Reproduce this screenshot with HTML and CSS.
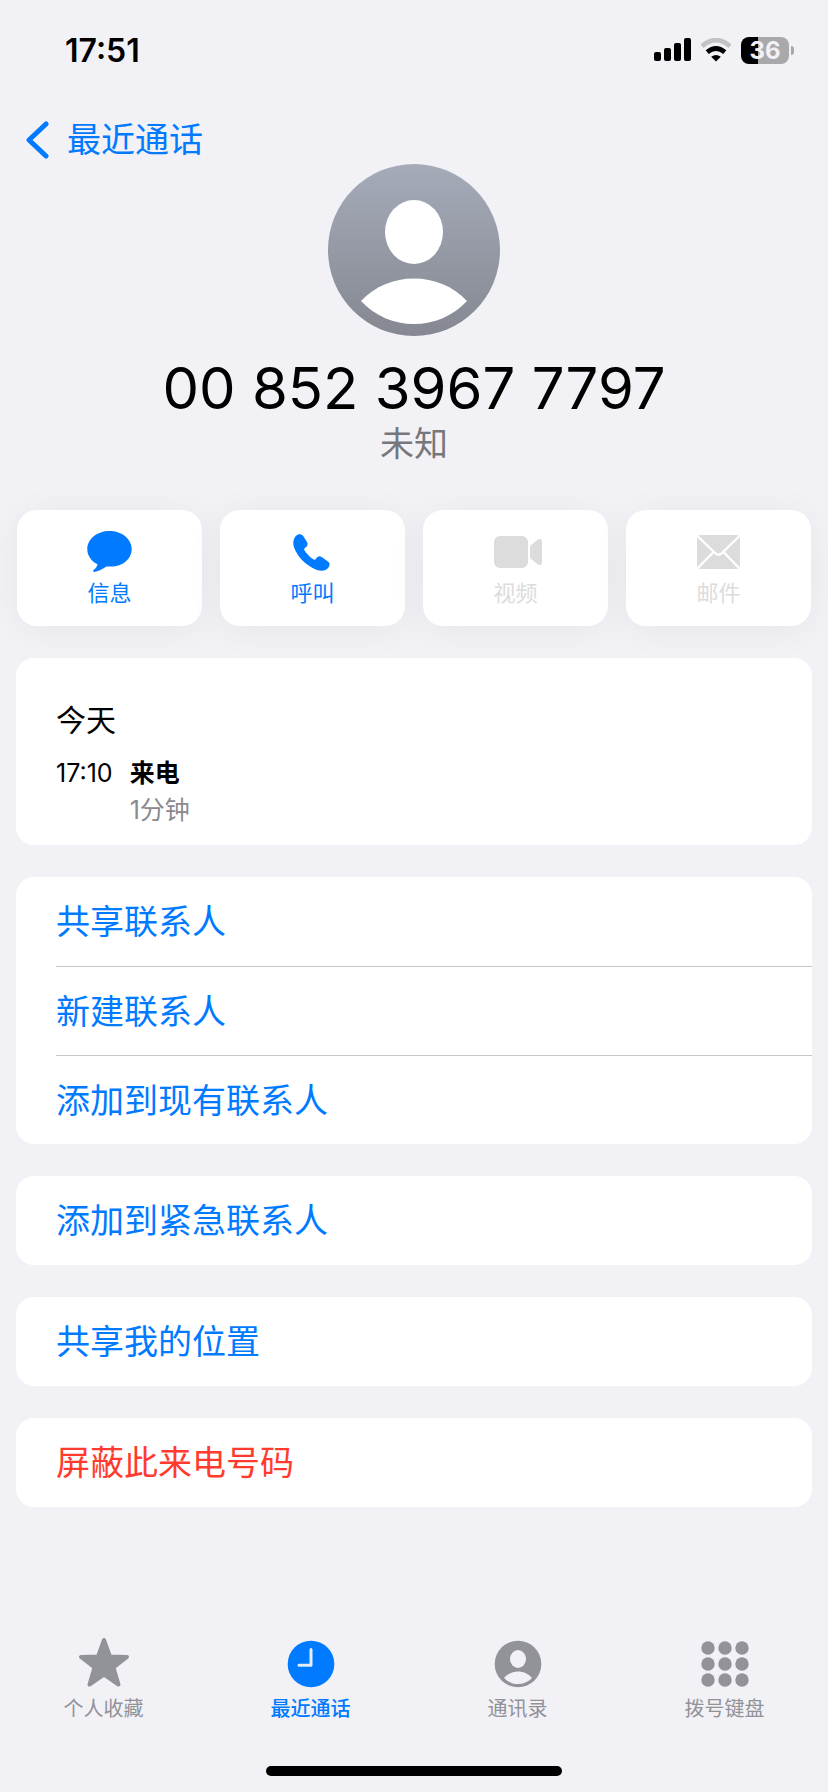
FILE: index.html
```html
<!DOCTYPE html>
<html lang="zh-CN">
<head>
    <meta charset="UTF-8">
    <meta name="viewport" content="width=device-width, initial-scale=1.0">
    <title>最近通话</title>
    <link rel="stylesheet" href="styles.css">
</head>
<body>

    <div class="status-bar">
        <span class="time">17:51</span>
        <div class="status-icons">
            <svg width="37" height="24" viewBox="0 0 37 24">
                <rect x="0" y="14" width="7" height="9" rx="2"/>
                <rect x="10" y="10" width="7" height="13" rx="2"/>
                <rect x="20" y="5" width="7" height="18" rx="2"/>
                <rect x="30" y="0" width="7" height="23" rx="2"/>
            </svg>
            <svg width="32" height="24" viewBox="0 0 32 24">
                <path d="M2 8.2Q16-4.2 30 8.2" fill="none" stroke="#c3c3c7" stroke-width="4.6"/>
                <path d="M7.2 14.2Q16 6.8 24.8 14.2" fill="none" stroke="#000" stroke-width="4.8"/>
                <path d="M11.2 18.8Q16 15 20.8 18.8L16 23.6Z"/>
            </svg>
            <div class="battery">
                <span class="battery-level">36</span>
                <span class="battery-tip"></span>
            </div>
        </div>
    </div>

    <nav class="nav-bar">
        <a href="#" class="back">
            <svg width="24" height="40" viewBox="0 0 24 40">
                <path d="M20 4L3 20L20 36" fill="none" stroke="currentColor" stroke-width="5" stroke-linecap="round" stroke-linejoin="round"/>
            </svg>
            最近通话
        </a>
    </nav>

    <header class="contact">
        <svg class="avatar" width="172" height="172" viewBox="0 0 172 172">
            <defs>
                <linearGradient id="avatarFill" x1="0" y1="0" x2="0" y2="1">
                    <stop offset="0" stop-color="#a5abb9"/>
                    <stop offset="1" stop-color="#858891"/>
                </linearGradient>
            </defs>
            <circle cx="86" cy="86" r="86" fill="url(#avatarFill)"/>
            <ellipse cx="86" cy="68" rx="29" ry="32" fill="#fff"/>
            <path d="M33 137C47 122 66 114.500 86 114.500S125 122 139 137C125 152 106 160 86 160S47 152 33 137Z" fill="#fff"/>
        </svg>
        <h1>00 852 3967 7797</h1>
        <p>未知</p>
    </header>

    <main>
        <div class="actions">
            <button type="button">
                <svg width="46" height="42" viewBox="0 0 46 42">
                    <path d="M22.500 0C34.800 0 44.700 8 44.700 18S35.600 35.600 24 35.600H19.500C15 38.500 10.500 40.700 7.500 41C6 41 5.700 39.800 6.600 39C8.700 37.500 10 35.500 10.500 33.200C4 30 0.300 24.500 0.300 18C0.300 8 10.200 0 22.500 0Z"/>
                </svg>
                信息
            </button>
            <button type="button">
                <svg width="40" height="42" viewBox="0 0 40 42">
                    <path transform="translate(0 3)" d="M0.300 9C0.300 4.500 3 0.600 6 0.200C7.600 0 9 0.500 10 1.800L14 8C15 9.700 14.800 11.300 13.600 12.600L11.400 14.500C11 14.900 11 15.400 11.300 16C13.500 19.800 17 23.300 20.800 25.600C21.400 25.900 21.900 25.800 22.300 25.400L24.500 23.100C25.700 22 27.200 22 28.600 22.900L35 27.400C36.500 28.500 37 30.200 36.300 32C35.200 35 32 36.700 28.500 36.700C23 36.700 15.500 32.500 9.500 26.500C3.800 20.500 0.300 13.800 0.300 9Z"/>
                </svg>
                呼叫
            </button>
            <button type="button" disabled>
                <svg width="52" height="42" viewBox="0 0 52 42">
                    <rect x="4" y="5" width="34" height="32" rx="6"/>
                    <path d="M40 16.500Q40 15 41.200 14L47.500 8.800C49.500 7.300 52 8 52 10V32C52 34 49.500 34.700 47.500 33.200L41.200 28Q40 27 40 25.500Z"/>
                </svg>
                视频
            </button>
            <button type="button" disabled>
                <svg width="44" height="42" viewBox="0 0 44 42">
                    <rect x="0" y="4" width="43" height="34" rx="3"/>
                    <path d="M0 4.500L18 22Q21.500 25.500 25 22L43 4.500M0 38L16 21.500M43 38L27 21.500" fill="none" stroke="#fff" stroke-width="2.400"/>
                </svg>
                邮件
            </button>
        </div>

        <section class="card call-log">
            <h2>今天</h2>
            <div class="call">
                <time>17:10</time>
                <strong>来电</strong>
                <span class="duration">1分钟</span>
            </div>
        </section>

        <section class="card">
            <button type="button" class="row">共享联系人</button>
            <button type="button" class="row">新建联系人</button>
            <button type="button" class="row">添加到现有联系人</button>
        </section>

        <section class="card">
            <button type="button" class="row">添加到紧急联系人</button>
        </section>

        <section class="card">
            <button type="button" class="row">共享我的位置</button>
        </section>

        <section class="card">
            <button type="button" class="row danger">屏蔽此来电号码</button>
        </section>
    </main>

    <footer>
        <nav class="tab-bar">
            <a href="#">
                <svg width="52" height="52" viewBox="0 0 52 52">
                    <path d="M26 4L32 20.500L49 21L35.500 31.500L40.500 48.500L26 38.500L11.500 48.500L16.500 31.500L3 21L20 20.500Z" stroke="currentColor" stroke-width="4" stroke-linejoin="round"/>
                </svg>
                个人收藏
            </a>
            <a href="#" class="active">
                <svg width="52" height="52" viewBox="0 0 52 52">
                    <circle cx="26" cy="28" r="23.300"/>
                    <path d="M26 13.500V29.300H14" fill="none" stroke="#e4edfc" stroke-width="3" stroke-linecap="round" stroke-linejoin="round"/>
                </svg>
                最近通话
            </a>
            <a href="#">
                <svg width="52" height="52" viewBox="0 0 52 52">
                    <circle cx="26" cy="28" r="23.300"/>
                    <ellipse cx="26" cy="23" rx="8" ry="9" fill="#f1f1f6"/>
                    <path d="M12 42C16 37.500 21 35.500 26 35.500S36 37.500 40 42C36 46 31 48 26 48S16 46 12 42Z" fill="#f1f1f6"/>
                </svg>
                通讯录
            </a>
            <a href="#">
                <svg width="52" height="52" viewBox="0 0 52 52">
                    <circle cx="9" cy="12" r="6.700"/>
                    <circle cx="26" cy="12" r="6.700"/>
                    <circle cx="43" cy="12" r="6.700"/>
                    <circle cx="9" cy="28" r="6.700"/>
                    <circle cx="26" cy="28" r="6.700"/>
                    <circle cx="43" cy="28" r="6.700"/>
                    <circle cx="9" cy="44" r="6.700"/>
                    <circle cx="26" cy="44" r="6.700"/>
                    <circle cx="43" cy="44" r="6.700"/>
                </svg>
                拨号键盘
            </a>
        </nav>
        <div class="home-indicator"></div>
    </footer>

</body>
</html>
```
FILE: styles.css
```css
* {
    box-sizing: border-box;
}
body {
    display: flex;
    flex-direction: column;
    min-height: 100vh;
    margin: 0;
    background-color: #f1f1f6;
    color: #000;
    font-family: Inter, "Noto Sans CJK SC", sans-serif;
}
h1, h2, p {
    margin: 0;
}
h1, h2 {
    font-weight: 400;
}
a {
    color: #007aff;
    text-decoration: none;
}
button {
    border: none;
    background: none;
    color: #007aff;
    font-family: inherit;
    font-weight: inherit;
    cursor: pointer;
}
svg {
    display: block;
    flex-shrink: 0;
    fill: currentColor;
}

/* status bar */
.status-bar {
    display: flex;
    justify-content: space-between;
    align-items: center;
    height: 100px;
    padding: 0 34px 0 65px;
}
.time {
    font-size: 32px;
    font-weight: 600;
}
.status-icons {
    display: flex;
    align-items: center;
    gap: 9px;
}
.battery {
    display: flex;
    align-items: center;
    gap: 2px;
}
.battery-level {
    width: 48px;
    border-radius: 8px;
    background: linear-gradient(to right, #000 17px, #a9a9ab 17px);
    color: #f1f1f6;
    font-size: 24px;
    font-weight: 700;
    line-height: 27px;
    text-align: center;
}
.battery-tip {
    width: 3px;
    height: 9px;
    border-radius: 0 4px 4px 0;
    background-color: #a9a9ab;
}

/* back link */
.nav-bar {
    height: 64px;
    padding: 20px 26px 0;
}
.back {
    display: inline-flex;
    align-items: center;
    gap: 17px;
    font-size: 34px;
    line-height: 40px;
}

.contact {
    display: flex;
    flex-direction: column;
    align-items: center;
}
.contact h1 {
    margin-top: 16px;
    font-size: 58px;
    line-height: 72px;
}
.contact p {
    color: #77777b;
    font-size: 34px;
    line-height: 40px;
}

main {
    display: flex;
    flex-direction: column;
    gap: 32px;
    padding: 46px 16px 32px;
}
.actions {
    display: grid;
    grid-template-columns: repeat(4, 1fr);
    gap: 18px;
    padding: 0 1px;
}
.actions button {
    display: flex;
    flex-direction: column;
    align-items: center;
    gap: 4px;
    height: 116px;
    padding: 21px 0 0;
    border-radius: 20px;
    background-color: #fff;
    box-shadow: 0 4px 36px rgba(0, 0, 0, 0.05);
    font-size: 22px;
    line-height: 32px;
}
.actions button:disabled {
    color: #dcdcdc;
    cursor: default;
}

.card {
    overflow: hidden;
    border-radius: 18px;
    background-color: #fff;
}
.call-log {
    padding: 42px 40px 16px;
}
.call-log h2 {
    margin-bottom: 15px;
    font-size: 30px;
    line-height: 40px;
}
.call {
    display: grid;
    grid-template-columns: auto 1fr;
    column-gap: 17px;
    font-size: 25px;
    line-height: 37px;
}
.call strong {
    font-weight: 600;
}
.duration {
    grid-column: 2;
    color: #8a8a8e;
}
.row {
    display: block;
    width: calc(100% - 40px);
    height: 89px;
    margin-left: 40px;
    padding: 0 0 4px;
    font-size: 34px;
    text-align: left;
}
.row + .row {
    border-top: 1px solid #c6c6c8;
}
.danger {
    color: #ff3b30;
}

/* tab bar */
footer {
    margin-top: auto;
    padding-bottom: 16px;
}
.tab-bar {
    display: grid;
    grid-template-columns: repeat(4, 1fr);
}
.tab-bar a {
    display: flex;
    flex-direction: column;
    align-items: center;
    gap: 6px;
    color: #929299;
    font-size: 20px;
    line-height: 30px;
}
.tab-bar .active {
    color: #007aff;
    font-weight: 500;
}
.home-indicator {
    width: 296px;
    height: 10px;
    margin: 42px auto 0;
    border-radius: 5px;
    background-color: #000;
}
```
